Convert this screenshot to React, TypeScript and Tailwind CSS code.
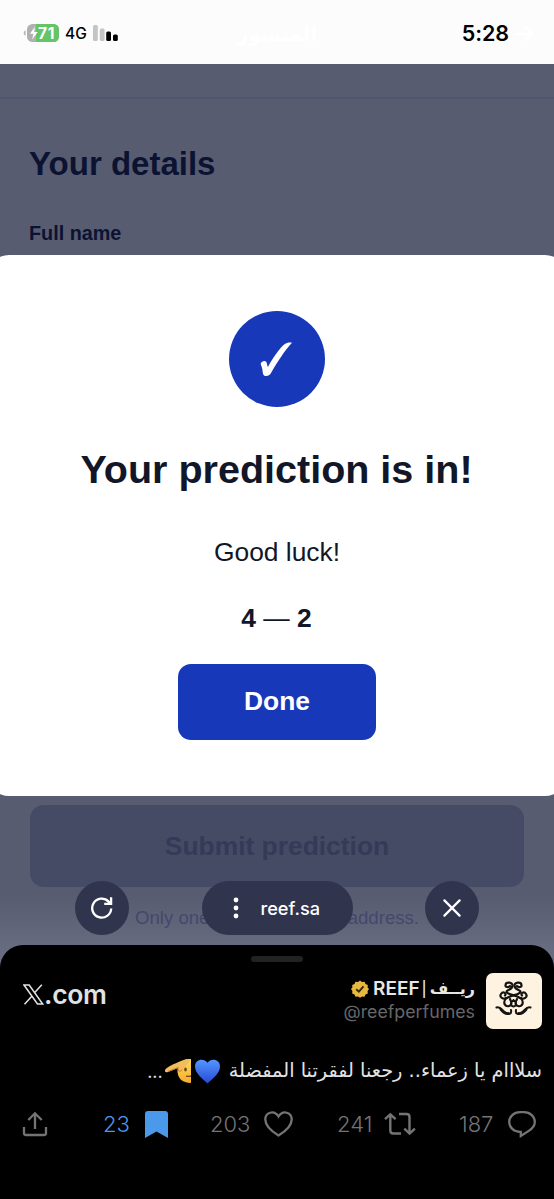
import type { ReactNode } from "react";

const StatusBar = () => {
  return (
    <header className="relative flex h-[64px] items-center bg-[#fcfcfc] font-['Inter',sans-serif] text-black">
      <svg className="ml-[23px] mt-[2px] shrink-0" width="37" height="18" viewBox="0 0 37 18">
        <path d="M2.6 6.2v5.6C1.4 11.2.7 10.2.7 9s.7-2.2 1.9-2.8z" fill="#b4b4b6" />
        <rect x="4" y="0" width="32" height="18" rx="5.5" fill="#b0b0b2" />
        <path d="M13 0h17.5A5.5 5.5 0 0 1 36 5.5v7a5.5 5.5 0 0 1-5.5 5.5H13z" fill="#65c466" />
        <path d="M11.8 2.8 7 9.8h3.4l-1.3 5.8 5.7-7.6h-3.6z" fill="#fff" />
        <text x="15" y="14.6" fill="#fff" fontSize="15.5" fontWeight="700" textLength="16.5">71</text>
      </svg>
      <span className="ml-[5px] mt-[3px] text-[15.5px] font-medium">4G</span>
      <svg className="ml-[6px] mt-[2px]" width="26" height="16" viewBox="0 0 26 16">
        <rect x="0" y="0" width="4.8" height="16" rx="1.5" fill="#c4c4c4" />
        <rect x="6.8" y="3.5" width="4.8" height="12.5" rx="1.5" fill="#c4c4c4" />
        <rect x="13.2" y="6.5" width="4.8" height="9.5" rx="1.5" fill="#000" />
        <rect x="20" y="9.5" width="4.8" height="6.5" rx="1.5" fill="#000" />
      </svg>
      <span className="absolute left-[237px] top-[19px] font-['DejaVu_Sans',sans-serif] text-[20px] font-bold text-white" dir="rtl">المنشور</span>
      <span className="ml-auto mt-[3px] text-[21.5px] font-semibold tracking-[-0.1px]">5:28</span>
      <svg className="ml-[6px] mr-[20px] mt-[4px]" width="19" height="18" viewBox="0 0 19 18" fill="none" stroke="#fff" strokeWidth="2">
        <path d="M1 9h16M10 2l7 7-7 7" />
      </svg>
    </header>
  );
};

const PredictionDialog = () => {
  return (
    <div className="-mx-[12px] flex h-[541px] flex-col items-center rounded-[21px] bg-white pt-[56px] text-[#111728]">
      <div className="flex h-[96px] w-[96px] items-center justify-center rounded-full bg-[#1838ba]">
        <svg className="mt-[2px]" width="34" height="36" viewBox="0 0 34 36">
          <path d="M.8 21.3C1.5 19.3 4.7 18 6.2 19.8C7 21 7.1 23.5 7.9 25C12.5 17 19 6.5 24.5 2.3C26.7.7 29.5.3 32 .8C25 8 17.5 20 11 31C9.8 33.6 7 34.4 4.5 33.7C2.5 33 2.9 29 2 25.8C1.5 24 .5 22.5.8 21.3Z" fill="#fff" />
        </svg>
      </div>
      <h1 className="mr-[1px] mt-[40px] text-[39.5px] font-bold leading-[44px]">Your prediction is in!</h1>
      <p className="mt-[45px] text-[26.4px] leading-[32px]">Good luck!</p>
      <p className="mr-[1px] mt-[34px] text-[26.4px] leading-[32px]">
        <b>4</b> — <b>2</b>
      </p>
      <button className="mt-[30px] h-[76px] w-[198px] rounded-[13px] bg-[#1838ba] text-[26.4px] font-bold text-white">
        Done
      </button>
    </div>
  );
};

const BrowserControls = () => {
  return (
    <div className="absolute left-[75px] top-[881px] flex w-[404px] items-center justify-between text-white">
      <button className="flex h-[54px] w-[54px] items-center justify-center rounded-full bg-[#30344d]">
        <svg width="24" height="24" viewBox="0 0 24 24" fill="none" stroke="currentColor" strokeWidth="2.3">
          <path d="M21.2 12.5A9.5 9.5 0 1 1 18.6 5.6L20.4 7.5M14.2 7.9h6.9V1.2" />
        </svg>
      </button>
      <button className="flex h-[54px] w-[151px] items-center rounded-full bg-[#30344d] pl-[31px]">
        <svg width="6" height="22" viewBox="0 0 6 22" fill="currentColor">
          <circle cx="3" cy="3" r="2.4" />
          <circle cx="3" cy="11" r="2.4" />
          <circle cx="3" cy="19" r="2.4" />
        </svg>
        <span className="ml-[22px] mt-px font-['Inter',sans-serif] text-[18.2px] font-medium">reef.sa</span>
      </button>
      <button className="flex h-[54px] w-[54px] items-center justify-center rounded-full bg-[#30344d]">
        <svg width="18" height="18" viewBox="0 0 18 18" fill="none" stroke="currentColor" strokeWidth="2.2" strokeLinecap="round">
          <path d="M1.4 1.4l15.2 15.2M16.6 1.4L1.4 16.6" />
        </svg>
      </button>
    </div>
  );
};

const ReefLogo = () => {
  return (
    <svg className="ml-[11px] h-[56px] w-[56px] rounded-[7px] bg-[#fdf3e0]" viewBox="0 0 56 56" fill="none" stroke="#151412" strokeLinecap="round">
      {/* upper swirls crossing down into the side loops */}
      <path d="M24 13C22 15 19 14 19.5 12C20 8.5 27 9 26.500 13C26 17 20 17 20.5 19C22 22 30 22 34 25C38 27 42 24 40 21C38 18 34 20 36 22.500" strokeWidth="2.2" />
      <path d="M31 13C33 15 36 14 35.5 12C35 8.5 28 9 28.500 13C29 17 35 17 34.5 19C33 22 25 22 21 25C17 27 13 24 15 21C17 18 21 20 19 22.500" strokeWidth="2.2" />
      {/* lower knot */}
      <path d="M20 25C16 31 20 34 23 33C27 32 25 28 24 26M35 25C39 31 35 34 32 33C28 32 30 28 31 26" strokeWidth="2.2" />
      <path d="M27.5 27C24 29 24 33 27.500 33.500C31 33 31 29 27.500 27" strokeWidth="1.8" />
      {/* wings */}
      <path d="M10.5 34.5C14 33 16 37 19 39.5C22 42 26 41 25 37M44.5 34.5C41 33 39 37 36 39.5C33 42 29 41 30 37" strokeWidth="2" />
      <path d="M15 36.5Q19 41 22 40.5M40 36.5Q36 41 33 40.5" strokeWidth="2.8" />
    </svg>
  );
};

interface PostActionProps {
  count: string;
  className: string;
  children: ReactNode;
}

const PostAction = ({ count, className, children }: PostActionProps) => {
  return (
    <div className={`flex items-center justify-end ${className}`}>
      <span className="mr-auto">{count}</span>
      {children}
    </div>
  );
};

const PostSheet = () => {
  return (
    <section className="-mt-[23px] h-[254px] rounded-t-[23px] bg-black pt-[11px] font-['Inter',sans-serif]">
      <div className="mx-auto h-[6px] w-[52px] rounded-full bg-[#222222]" />
      <div className="mt-[11px] flex h-[56px] items-start justify-between pl-[23px] pr-[12px]">
        <div className="mt-[8px] flex items-center text-[#e2e2e2]">
          <svg width="21" height="21" viewBox="0 0 21 21" fill="none" stroke="currentColor" strokeWidth="1.5">
            <path d="M1 1h5.2l13.5 19h-5.2zM18.8.8l-7.5 8.3M9.3 11.7L1.5 20.3" />
          </svg>
          <span className="text-[26.5px] font-semibold leading-[26px] tracking-[-0.3px]">.com</span>
        </div>
        <div className="flex">
          <div className="flex flex-col items-end">
            <div className="mt-[4px] flex h-[24px] items-center text-[19px] font-semibold text-[#e7e7e8]">
              <svg width="18" height="18" viewBox="0 0 18 18">
                <path d="M9 .5l2 1.5 2.5-.3 1 2.2 2.3 1-.2 2.5L18 9l-1.4 2 .2 2.5-2.3 1-1 2.2-2.5-.3L9 17.7l-2-1.3-2.5.3-1-2.2-2.3-1 .2-2.5L0 9l1.4-1.6-.2-2.5 2.3-1 1-2.2L7 2z" fill="#e8b93e" />
                <path d="M5.2 9.2l2.7 2.500 4.6-5.300" stroke="#352a09" strokeWidth="1.9" fill="none" />
              </svg>
              <span className="ml-[4px]">REEF</span>
              <span className="ml-[2px] text-[15px] font-medium">|</span>
              <span className="ml-[3px] font-['DejaVu_Sans',sans-serif] text-[16px] font-bold" dir="rtl">ريــف</span>
            </div>
            <span className="text-[17.8px] leading-[22px] text-[#66676a]">@reefperfumes</span>
          </div>
          <ReefLogo />
        </div>
      </div>
      <div className="mt-[25px] flex h-[34px] items-center pr-[12px] text-[#e3e3e4]" dir="rtl">
        <span className="whitespace-nowrap font-['DejaVu_Sans',sans-serif] text-[19.35px]">سلااام يا زعماء.. رجعنا لفقرتنا المفضلة</span>
        <svg className="mr-[9px] shrink-0" width="25" height="25" viewBox="0 0 25 25">
          <defs>
            <linearGradient id="heart" x1="0" y1="0" x2="0" y2="1">
              <stop offset="0" stopColor="#5596ff" />
              <stop offset="1" stopColor="#254bd4" />
            </linearGradient>
          </defs>
          <path d="M12.5 24.5C8 20 0 14.5 0 7.2C0 0 9-1.5 12.5 3.8C16-1.5 25 0 25 7.2C25 14.5 17 20 12.5 24.5Z" fill="url(#heart)" />
        </svg>
        <svg className="mr-[4px] shrink-0" width="26" height="26" viewBox="0 0 26 26">
          <defs>
            <linearGradient id="face" x1="0" y1="0" x2="0" y2="1">
              <stop offset="0" stopColor="#ffdf57" />
              <stop offset="1" stopColor="#f4ac30" />
            </linearGradient>
          </defs>
          <path d="M26 1v24C17 25 12.5 20 12.5 13S17 1 26 1z" fill="url(#face)" />
          <path d="M0 12C1 9 13 4 20 1.5C25 0 26 2 23 5.5L17 12C15 15 12 13 13 10L3 14C0 15-.5 13 0 12z" fill="#f4bc5a" />
          <path d="M3 13.5L13.5 9.5M13.3 10.5C13 14 15.5 14 17.5 11.5" stroke="#b77b38" strokeWidth="1" fill="none" />
          <ellipse cx="20.5" cy="11.5" rx="1.3" ry="2" fill="#6e431f" />
          <path d="M21 18.3H26" stroke="#774517" strokeWidth="1.3" />
        </svg>
        <span className="mr-[2px] text-[18px]">...</span>
      </div>
      <div className="mt-[15px] flex h-[42px] items-center pl-[22px] text-[22px] font-light text-[#747477]">
        <svg className="shrink-0" width="26" height="26" viewBox="0 0 26 26" fill="none" stroke="currentColor" strokeWidth="2.3">
          <path d="M13 18V2.5M6.3 9L13 2.3 19.7 9M2 16v6q0 2 2 2h18q2 0 2-2v-6" />
        </svg>
        <PostAction count="23" className="ml-[55px] w-[65px] text-[#4b99ea]">
          <svg width="23" height="27" viewBox="0 0 23 27" fill="currentColor">
            <path d="M3 0h17q3 0 3 3v24l-11.5-6.5L0 27V3q0-3 3-3z" />
          </svg>
        </PostAction>
        <PostAction count="203" className="ml-[42px] w-[83px]">
          <svg width="29" height="26" viewBox="0 0 29 26" fill="none" stroke="currentColor" strokeWidth="2.3">
            <path d="M14.5 24.5C8 20.5 1.3 15.5 1.3 8.5C1.3 1.5 10-1.5 14.5 5.5C19-1.5 27.7 1.5 27.7 8.5C27.7 15.5 21 20.5 14.5 24.5Z" />
          </svg>
        </PostAction>
        <PostAction count="241" className="ml-[44px] w-[79px]">
          <svg width="32" height="24" viewBox="0 0 32 24" fill="none" stroke="currentColor" strokeWidth="2.4">
            <path d="M1 7.2L6.3 2.3l5.3 4.9M6.3 2.5v16q0 3 3 3H17M15 2h7.5q3 0 3 3v16.5M20.3 16.7l5.3 4.9 5.3-4.9" />
          </svg>
        </PostAction>
        <PostAction count="187" className="ml-[43px] w-[77px]">
          <svg width="28" height="27" viewBox="0 0 28 27" fill="none" stroke="currentColor" strokeWidth="2.3">
            <path d="M12.8 25v-4.2H12C5.7 20.8 1.2 16.5 1.2 11S5.7 1.2 12 1.2h4C22.3 1.2 26.8 5.5 26.8 11c0 4-2.6 6.7-6 8.9z" />
          </svg>
        </PostAction>
      </div>
    </section>
  );
};

export default function App() {
  return (
    <div className="relative h-[1199px] w-[554px] overflow-hidden bg-black font-['Liberation_Sans',Arial,sans-serif]">
      <StatusBar />
      <div className="h-[904px] bg-linear-to-b from-[#575c70] from-92% to-[#686c80] to-98%">
        <div className="h-[35px] border-b-2 border-[#50556f]" />
        <div className="h-[156px] px-[29px] text-[#0b1232]">
          <h2 className="pt-[46px] text-[33px] font-bold leading-[38px]">Your details</h2>
          <p className="mt-[38px] text-[19.8px] font-bold leading-[24px]">Full name</p>
        </div>
        <PredictionDialog />
        <div className="px-[30px] pt-[9px]">
          <button className="h-[82px] w-full rounded-[14px] bg-[#454b65] pt-[2px] text-[26.4px] font-bold text-[#343a57]">
            Submit prediction
          </button>
          <p className="mx-auto mt-[19px] flex w-[284px] justify-between text-[18.6px] leading-[24px] text-[#43496d]">
            <span>Only one</span>
            <span>address.</span>
          </p>
        </div>
      </div>
      <PostSheet />
      <BrowserControls />
    </div>
  );
}
